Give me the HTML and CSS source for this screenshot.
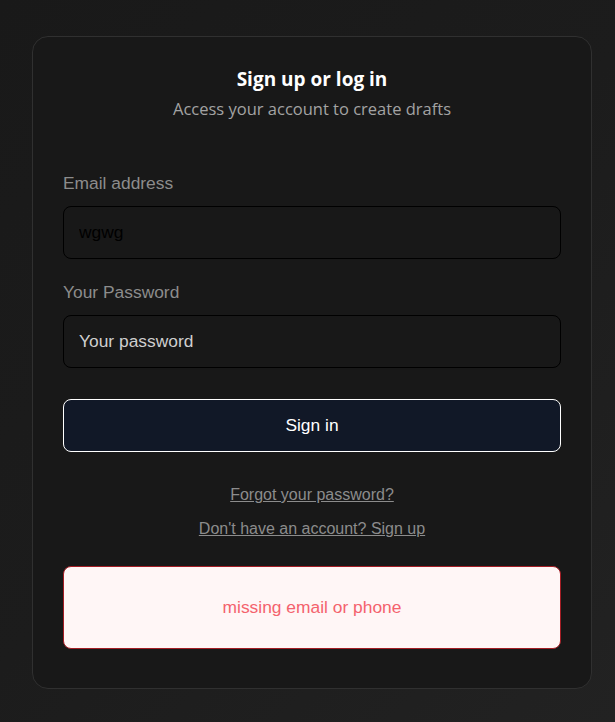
FILE: index.html
```html
<!DOCTYPE html>
<html lang="en">
<head>
<meta charset="utf-8">
<title>Sign up or log in</title>
<link rel="stylesheet" href="styles.css">
</head>
<body>
<main class="page">
  <section class="card">
    <h1 class="title">Sign up or log in</h1>
    <p class="subtitle">Access your account to create drafts</p>
    <form class="form">
      <label class="label label-email" for="email">Email address</label>
      <input class="field" id="email" type="text" value="wgwg">
      <label class="label label-pass" for="password">Your Password</label>
      <input class="field" id="password" type="password" placeholder="Your password">
      <button class="btn" type="button">Sign in</button>
    </form>
    <a class="link link-forgot" href="#">Forgot your password?</a>
    <a class="link link-signup" href="#">Don't have an account? Sign up</a>
    <div class="error">missing email or phone</div>
  </section>
</main>
</body>
</html>
```
FILE: styles.css
```css
html, body {
  margin: 0;
  padding: 0;
  height: 100%;
}
body {
  background: linear-gradient(135deg, #191919 0%, #1c1c1c 50%, #222222 100%);
  font-family: "Liberation Sans", Arial, sans-serif;
}
.page {
  padding: 36px 23px 0 32px;
}
.card {
  width: 498px;
  box-sizing: content-box;
  padding: 31px 30px 39px 30px;
  background: #181818;
  border: 1px solid #303030;
  border-radius: 16px;
  display: flex;
  flex-direction: column;
  align-items: center;
}
.title {
  margin: 0;
  font-family: "Open Sans", "Noto Sans", sans-serif;
  font-weight: 700;
  font-size: 19px;
  line-height: 22px;
  color: #ffffff;
}
.subtitle {
  margin: 7px 0 0 0;
  font-family: "Open Sans", "Noto Sans", sans-serif;
  font-size: 16.5px;
  line-height: 24px;
  color: #a3a3a3;
}
.form {
  width: 100%;
  display: flex;
  flex-direction: column;
  margin-top: 52px;
}
.label {
  font-size: 17.4px;
  line-height: 20px;
  color: #8c8c8c;
}
.label-pass {
  margin-top: 23px;
}
.field {
  margin-top: 13px;
  height: 53px;
  box-sizing: border-box;
  border: 1px solid #000000;
  border-radius: 8px;
  background: #181818;
  padding: 0 15px;
  font-family: "Liberation Sans", Arial, sans-serif;
  font-size: 17.4px;
  color: #000000;
  outline: none;
}
.field::placeholder {
  color: #cfcfcf;
  opacity: 1;
}
.btn {
  margin-top: 31px;
  height: 53px;
  box-sizing: border-box;
  border: 1px solid #ffffff;
  border-radius: 8px;
  background: #111827;
  color: #ffffff;
  font-family: "Liberation Sans", Arial, sans-serif;
  font-size: 17.4px;
  padding: 0;
}
.link {
  font-size: 16px;
  line-height: 20px;
  color: #8c8c8c;
  text-decoration: underline;
}
.link-forgot {
  margin-top: 33px;
}
.link-signup {
  margin-top: 14px;
}
.error {
  margin-top: 27px;
  width: 100%;
  height: 83px;
  box-sizing: border-box;
  border: 1px solid #a31d24;
  border-radius: 8px;
  background: #fff6f6;
  color: #f4626d;
  font-size: 17.4px;
  display: flex;
  align-items: center;
  justify-content: center;
}
```
